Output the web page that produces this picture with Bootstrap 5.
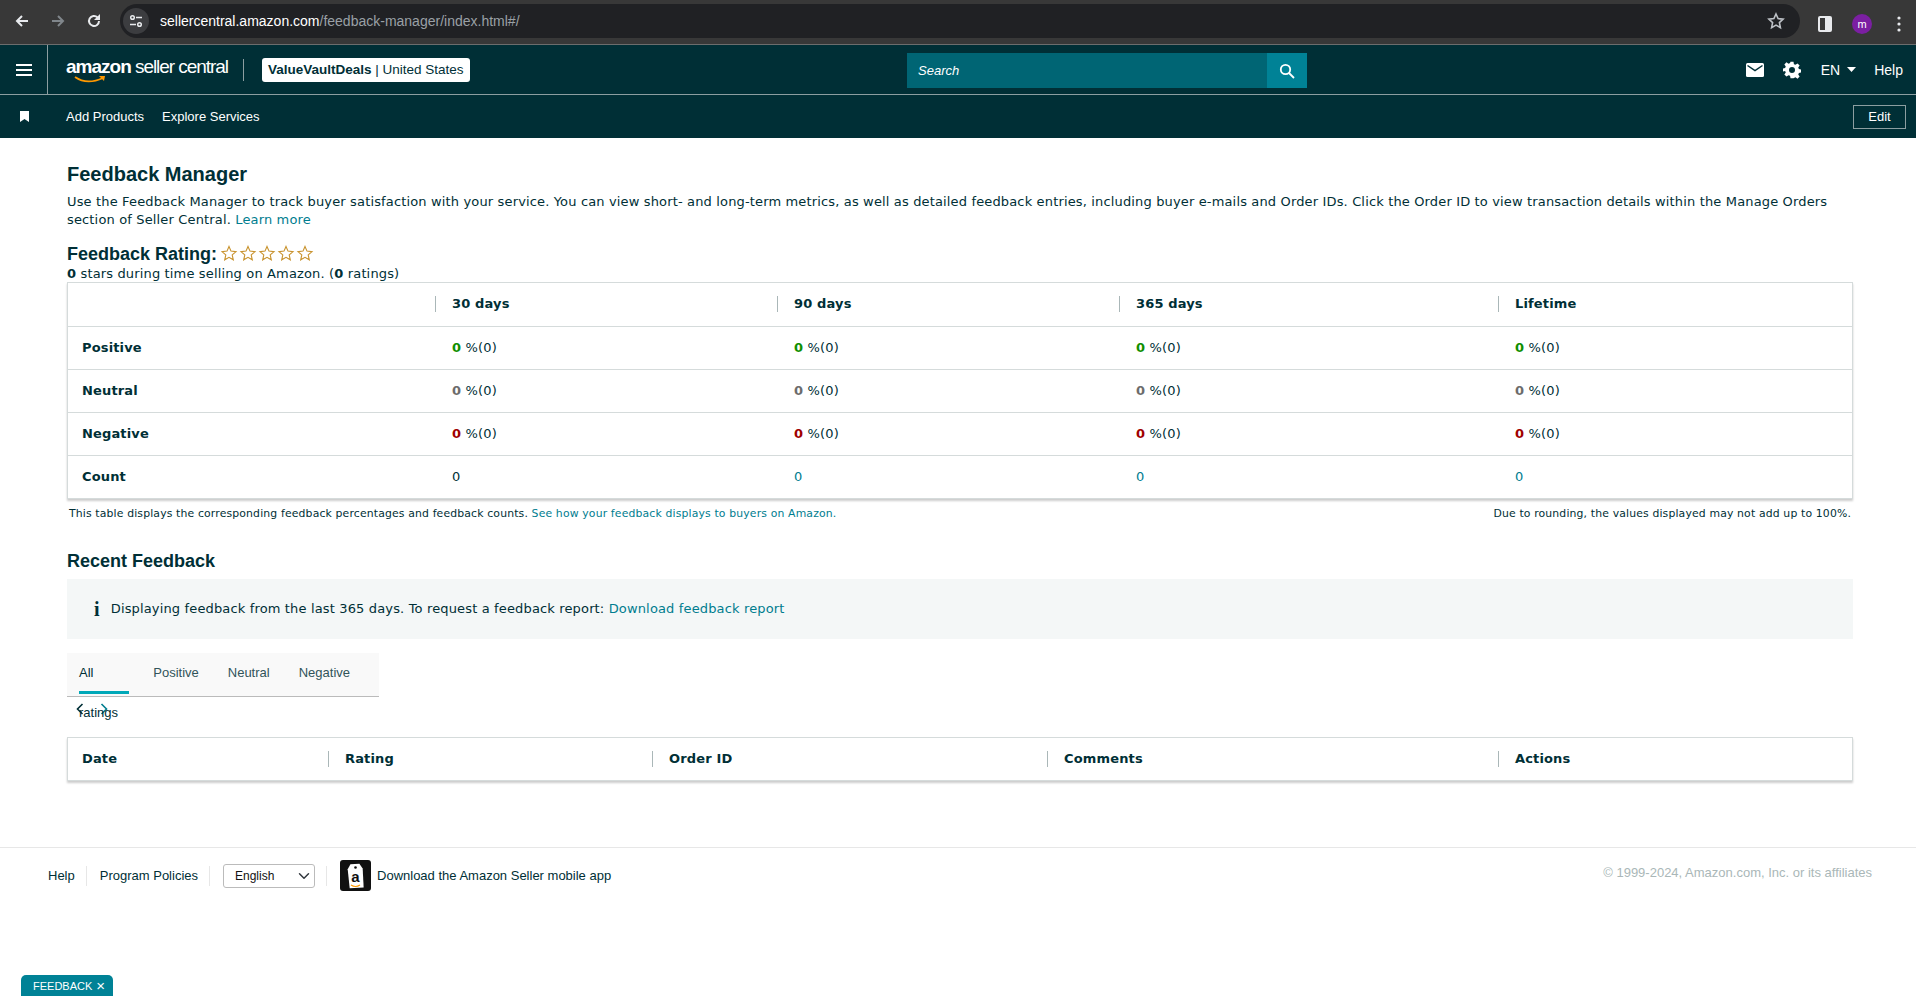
<!DOCTYPE html>
<html lang="en">
<head>
    <meta charset="UTF-8">
    <meta name="viewport" content="width=device-width, initial-scale=1.0">
    <title>Feedback Manager</title>
    <link href="https://cdn.jsdelivr.net/npm/bootstrap@5.3.0/dist/css/bootstrap.min.css" rel="stylesheet">
    <style>
        html, body { height: 100%; }
        body {
            background: #fff;
            color: #002f36;
            font-family: "DejaVu Sans", sans-serif;
            font-size: 13px;
            letter-spacing: .15px;
            line-height: 18px;
            overflow: hidden;
            position: relative;
        }
        a { color: #007d8f; text-decoration: none; }
        .chrome-bar { height: 45px; background: #383838; padding-top: 4px; padding-left: 4px; border-bottom: 1px solid #6d6d6d; letter-spacing: 0; }
        .chrome-btn { width: 36px; height: 34px; }
        .chrome-url {
            width: 1680px; height: 34px; margin-left: 8px; border-radius: 17px;
            background: #202124; color: #fff;
            font-family: "Liberation Sans", sans-serif; font-size: 14px; padding-left: 1px; gap: 11px;
        }
        .chrome-url .url-rest { color: #9aa0a6; }
        .chrome-site { width: 26px; height: 26px; border-radius: 50%; margin-left: 2px; background: #3c3d40; }
        .chrome-star { margin-left: auto; margin-right: 15px; }
        .chrome-tools { padding-left: 18px; }
        .chrome-avatar {
            width: 20px; height: 20px; margin: 0 25px 0 20px; border-radius: 50%; background: #7b1fa2; color: #fff;
            font-family: "Liberation Sans", sans-serif; font-size: 11px; line-height: 20px; text-align: center;
        }
        .sc-top { height: 50px; background: #002f36; border-bottom: 1px solid #8c9ea1; padding: 0; color: #fff; font-family: "Liberation Sans", sans-serif; letter-spacing: 0; }
        .sc-menu { width: 48px; height: 49px; border-right: 1px solid #8c9ea1; }
        .sc-logo { position: relative; margin-left: 18px; width: 159px; height: 30px; color: #fff; font-size: 19px; line-height: 24px; white-space: nowrap; letter-spacing: -1.05px; }
        .sc-logo b { letter-spacing: -1px; }
        .sc-logo svg { position: absolute; left: 0; top: 21px; }
        .sc-divider { width: 1px; height: 22px; background: #8c9ea1; margin: 0 18px; }
        .sc-account { background: #fff; color: #002f36; border-radius: 3px; font-size: 13.5px; height: 24px; line-height: 24px; padding: 0 6px; }
        .sc-search { position: absolute; left: 907px; top: 8px; width: 400px; height: 35px; }
        .sc-search-box { flex: 1; background: #006574; color: #fff; font-style: italic; font-size: 13px; line-height: 35px; padding-left: 11px; }
        .sc-search-btn { width: 40px; background: #008296; }
        .sc-right { margin-left: auto; margin-right: 13px; font-size: 14px; }
        .sc-gear { margin-left: 19px; }
        .sc-lang { margin-left: 20px; }
        .sc-caret { margin-left: 7px; }
        .sc-help { margin-left: 18px; }
        .sc-sub { height: 43px; background: #002f36; color: #fff; font-family: "Liberation Sans", sans-serif; font-size: 13px; padding-left: 20px; letter-spacing: 0; }
        .sc-sub-links { gap: 18px; margin-left: 37px; }
        .sc-edit { margin-left: auto; margin-right: 10px; width: 53px; height: 24px; line-height: 22px; text-align: center; border: 1px solid #8c9ea1; font-size: 13px; }

        .fb-page { padding: 24px 63px 0 67px; }
        .fb-h1 { font: bold 20px/24px "Liberation Sans", sans-serif; letter-spacing: 0; margin: 0 0 7px; }
        .fb-intro { margin: 0 0 13px; }
        .fb-h2 { font: bold 18px/22px "Liberation Sans", sans-serif; letter-spacing: 0; margin: 0; }
        .fb-rating { height: 23px; gap: 4px; }
        .fb-sub { margin: 0; height: 17px; }
        .fb-table-wrap { border: 1px solid #d5dbdb; box-shadow: 0 2px 2px rgba(0,0,0,.2); background: #fff; }
        .fb-table { table-layout: fixed; margin: 0; width: 100%; --bs-table-color: #002f36; font-size: 13px; line-height: 18px; }
        .fb-table th, .fb-table td { padding: 12px 0 12px 17px; border-color: #d5dbdb; height: 43px; vertical-align: middle; font-weight: normal; }
        .fb-table tbody tr:last-child td { border-bottom: 0; height: 42px; }
        .fb-table .fb-label { padding-left: 14px; font-weight: bold; }
        .fb-table thead th { font-weight: bold; position: relative; }
        .fb-table thead th.fb-sep::before { content: ""; position: absolute; left: 0; top: 13px; height: 16px; width: 1px; background: #aab7b8; }
        .fb-table-short thead th { height: 41px; border-bottom: 0; }
        .fb-num { font-weight: bold; }
        .fb-green { color: #0f8f00; }
        .fb-grey { color: #6c6c6c; }
        .fb-red { color: #a00000; }
        .fb-note { font-size: 10.85px; line-height: 14px; margin: 8px 2px 0 2px; letter-spacing: .15px; }
        .fb-recent { margin: 29px 0 7px; }
        .fb-info { background: #f4f7f7; height: 60px; padding-left: 27px; gap: 11px; }
        .fb-info b { font: 900 20px/20px "Liberation Serif", serif; }
        .fb-tabs { width: 312px; height: 44px; margin-top: 14px; background: #f9f9f9; border-bottom: 1px solid #bbb; padding-left: 12px; font: 13px "Liberation Sans", sans-serif; letter-spacing: 0; }
        .fb-tab { height: 41px; line-height: 40px; margin-right: 29px; position: relative; color: #31545a; }
        .fb-tab.on { color: #002f36; }
        .fb-tab.on::after { content: ""; position: absolute; left: 0; right: -5px; bottom: 0; height: 3px; background: #00a8b8; }
        .fb-pager { gap: 16px; height: 24px; padding-left: 9px; }
        .fb-table2-wrap { margin-top: 16px; }
        .sc-foot { position: absolute; left: 0; right: 0; top: 847px; height: 56px; border-top: 1px solid #e7e7e7; padding-left: 48px; font: 13px "Liberation Sans", sans-serif; letter-spacing: 0; }
        .foot-sep { width: 1px; height: 20px; background: #e7e7e7; margin: 0 13px 0 11px; }
        .foot-select { width: 92px; height: 24px; font: 12px "Liberation Sans", sans-serif; padding: 0 0 0 11px; border-color: #bbb; color: #111; background-position: right 4px center; background-size: 12px; border-radius: 3px; }
        .foot-copy { margin-left: auto; margin-right: 44px; margin-top: -6px; color: #aab7b8; font-size: 13px; }
        .foot-app { gap: 6px; }
        .foot-icon { width: 31px; height: 31px; border-radius: 3px; background: #111; display: block; }
        .fb-float { position: absolute; left: 21px; bottom: 0; width: 92px; height: 21px; background: #008296; color: #fff; border-radius: 5px 5px 0 0; font: 11px/22px "Liberation Sans", sans-serif; letter-spacing: 0; padding-left: 12px; white-space: nowrap; }
        .fb-float span { font-size: 15px; margin-left: 1px; vertical-align: -1px; }
    </style>
</head>
<body>
    <div class="chrome-bar d-flex">
        <div class="chrome-btn d-flex align-items-center justify-content-center">
            <svg width="16" height="16" viewBox="0 0 16 16" fill="none" stroke="#e8eaed" stroke-width="2"><path d="M14 8H3M8 3 3 8l5 5"/></svg>
        </div>
        <div class="chrome-btn d-flex align-items-center justify-content-center">
            <svg width="16" height="16" viewBox="0 0 16 16" fill="none" stroke="#80868b" stroke-width="2"><path d="M2 8h11M8 3l5 5-5 5"/></svg>
        </div>
        <div class="chrome-btn d-flex align-items-center justify-content-center">
            <svg width="16" height="16" viewBox="0 0 16 16" fill="none" stroke="#e8eaed" stroke-width="2"><path d="M13 8a5 5 0 1 1-1.5-3.600"/><path fill="#e8eaed" stroke="none" d="M14 1v6H8z"/></svg>
        </div>
        <div class="chrome-url d-flex align-items-center">
            <div class="chrome-site d-flex align-items-center justify-content-center">
                <svg width="14" height="14" viewBox="0 0 14 14" fill="none" stroke="#e8eaed" stroke-width="1.500"><circle cx="3.500" cy="3.500" r="1.800"/><path d="M7 3.500h6M1 10.500h6"/><circle cx="10.500" cy="10.500" r="1.800"/></svg>
            </div>
            <span>sellercentral.amazon.com<span class="url-rest">/feedback-manager/index.html#/</span></span>
            <svg class="chrome-star" width="18" height="18" viewBox="0 0 18 18" fill="none" stroke="#bdc1c6" stroke-width="1.600"><path d="m9 2 2.100 4.600 5 .6-3.700 3.400 1 5L9 13.100l-4.400 2.500 1-5L1.900 7.200l5-.6z"/></svg>
        </div>
        <div class="chrome-tools d-flex align-items-center">
            <svg width="14" height="16" viewBox="0 0 14 16"><rect x="1" y="1" width="12" height="14" rx="1" fill="none" stroke="#e8eaed" stroke-width="2"/><rect x="7" y="1" width="6" height="14" fill="#e8eaed"/></svg>
            <div class="chrome-avatar">m</div>
            <svg width="4" height="16" viewBox="0 0 4 16" fill="#e8eaed"><circle cx="2" cy="2" r="1.600"/><circle cx="2" cy="8" r="1.600"/><circle cx="2" cy="14" r="1.600"/></svg>
        </div>
    </div>

    <nav class="sc-top d-flex align-items-center position-relative">
        <div class="sc-menu d-flex align-items-center justify-content-center">
            <svg width="16" height="12" viewBox="0 0 16 12" fill="#fff"><rect width="16" height="2"/><rect y="5" width="16" height="2"/><rect y="10" width="16" height="2"/></svg>
        </div>
        <div class="sc-logo">
            <b>amazon</b> seller central
            <svg width="46" height="9" viewBox="0 0 46 9" fill="none"><path d="M9 1c7 5 17 6 28 1" stroke="#ff9900" stroke-width="1.800"/><path d="m33 0 6 0-1 5z" fill="#ff9900"/></svg>
        </div>
        <div class="sc-divider"></div>
        <div class="sc-account"><b>ValueVaultDeals</b> | United States</div>
        <div class="sc-search d-flex">
            <div class="sc-search-box">Search</div>
            <div class="sc-search-btn d-flex align-items-center justify-content-center">
                <svg width="16" height="16" viewBox="0 0 16 16" fill="none" stroke="#fff" stroke-width="1.800"><circle cx="6.500" cy="6.500" r="4.700"/><path d="m10 10 5 5"/></svg>
            </div>
        </div>
        <div class="sc-right d-flex align-items-center">
            <svg width="18" height="14" viewBox="0 0 18 14"><rect width="18" height="14" rx="1.500" fill="#fff"/><path d="m1.500 2.500 7.500 5 7.500-5" fill="none" stroke="#002f36" stroke-width="1.500"/></svg>
            <svg class="sc-gear" width="18" height="18" viewBox="0 0 24 24" fill="#fff"><path fill-rule="evenodd" d="M10 1h4l.6 3.200 2 .9 2.800-1.900 2.800 2.800-1.900 2.800.9 2 3.200.6v4l-3.200.6-.9 2 1.900 2.800-2.800 2.800-2.800-1.900-2 .9L14 23h-4l-.6-3.200-2-.9-2.800 1.900-2.800-2.800 1.900-2.800-.9-2L-.4 14v-4l3.200-.6.900-2L1.800 4.600 4.600 1.800l2.800 1.900 2-.9zM12 8a4 4 0 1 0 0 8 4 4 0 0 0 0-8"/></svg>
            <span class="sc-lang">EN</span>
            <svg class="sc-caret" width="9" height="5" viewBox="0 0 9 5" fill="#fff"><path d="M0 0h9L4.500 5z"/></svg>
            <span class="sc-help">Help</span>
        </div>
    </nav>
    <div class="sc-sub d-flex align-items-center">
        <svg width="9" height="11" viewBox="0 0 9 11" fill="#fff"><path d="M0 0h9v11L4.500 8 0 11z"/></svg>
        <div class="sc-sub-links d-flex"><span>Add Products</span><span>Explore Services</span></div>
        <div class="sc-edit">Edit</div>
    </div>

    <main class="fb-page">
        <h1 class="fb-h1">Feedback Manager</h1>
        <p class="fb-intro">Use the Feedback Manager to track buyer satisfaction with your service. You can view short- and long-term metrics, as well as detailed feedback entries, including buyer e-mails and Order IDs. Click the Order ID to view transaction details within the Manage Orders section of Seller Central. <a href="#">Learn more</a></p>
        <div class="fb-rating d-flex align-items-center">
            <h2 class="fb-h2">Feedback Rating:</h2>
            <svg width="96" height="18" viewBox="0 0 96 18" fill="none" stroke="#c8922d" stroke-width="1.100">
                <path id="st" d="m8 1.500 2 4.600 5 .5-3.800 3.300 1.100 4.900L8 12.300l-4.300 2.500 1.100-4.900L1 6.600l5-.5z"/>
                <use href="#st" x="19"/><use href="#st" x="38"/><use href="#st" x="57"/><use href="#st" x="76"/>
            </svg>
        </div>
        <p class="fb-sub"><b>0</b> stars during time selling on Amazon. (<b>0</b> ratings)</p>

        <div class="fb-table-wrap">
            <table class="table fb-table">
                <colgroup><col style="width:367px"><col style="width:342px"><col style="width:342px"><col style="width:379px"><col></colgroup>
                <thead>
                    <tr><th></th><th class="fb-sep">30 days</th><th class="fb-sep">90 days</th><th class="fb-sep">365 days</th><th class="fb-sep">Lifetime</th></tr>
                </thead>
                <tbody>
                    <tr><td class="fb-label">Positive</td><td><span class="fb-num fb-green">0</span> %(0)</td><td><span class="fb-num fb-green">0</span> %(0)</td><td><span class="fb-num fb-green">0</span> %(0)</td><td><span class="fb-num fb-green">0</span> %(0)</td></tr>
                    <tr><td class="fb-label">Neutral</td><td><span class="fb-num fb-grey">0</span> %(0)</td><td><span class="fb-num fb-grey">0</span> %(0)</td><td><span class="fb-num fb-grey">0</span> %(0)</td><td><span class="fb-num fb-grey">0</span> %(0)</td></tr>
                    <tr><td class="fb-label">Negative</td><td><span class="fb-num fb-red">0</span> %(0)</td><td><span class="fb-num fb-red">0</span> %(0)</td><td><span class="fb-num fb-red">0</span> %(0)</td><td><span class="fb-num fb-red">0</span> %(0)</td></tr>
                    <tr><td class="fb-label">Count</td><td>0</td><td><a href="#">0</a></td><td><a href="#">0</a></td><td><a href="#">0</a></td></tr>
                </tbody>
            </table>
        </div>
        <div class="fb-note d-flex justify-content-between">
            <span>This table displays the corresponding feedback percentages and feedback counts. <a href="#">See how your feedback displays to buyers on Amazon.</a></span>
            <span>Due to rounding, the values displayed may not add up to 100%.</span>
        </div>

        <h2 class="fb-h2 fb-recent">Recent Feedback</h2>
        <div class="fb-info d-flex align-items-center">
            <b>i</b>
            <span>Displaying feedback from the last 365 days. To request a feedback report: <a href="#">Download feedback report</a></span>
        </div>
        <div class="fb-tabs d-flex">
            <div class="fb-tab on">All ratings</div>
            <div class="fb-tab">Positive</div>
            <div class="fb-tab">Neutral</div>
            <div class="fb-tab">Negative</div>
        </div>
        <div class="fb-pager d-flex align-items-center">
            <svg width="8" height="12" viewBox="0 0 8 12" fill="none" stroke="#002f36" stroke-width="1.600"><path d="M6.500 1 1.500 6l5 5"/></svg>
            <svg width="8" height="12" viewBox="0 0 8 12" fill="none" stroke="#007d8f" stroke-width="1.600"><path d="m1.500 1 5 5-5 5"/></svg>
        </div>
        <div class="fb-table-wrap fb-table2-wrap">
            <table class="table fb-table fb-table-short">
                <colgroup><col style="width:260px"><col style="width:324px"><col style="width:395px"><col style="width:451px"><col></colgroup>
                <thead>
                    <tr><th class="fb-label">Date</th><th class="fb-sep">Rating</th><th class="fb-sep">Order ID</th><th class="fb-sep">Comments</th><th class="fb-sep">Actions</th></tr>
                </thead>
            </table>
        </div>
    </main>

    <footer class="sc-foot d-flex align-items-center">
        <span>Help</span>
        <div class="foot-sep"></div>
        <span>Program Policies</span>
        <div class="foot-sep"></div>
        <select class="form-select foot-select" aria-label="Language"><option>English</option></select>
        <div class="foot-sep"></div>
        <div class="foot-app d-flex align-items-center">
            <svg class="foot-icon" viewBox="0 0 31 31"><path d="m11 4 9 0 3 5 0 19-14 0-1-19z" fill="#fff" transform="rotate(-3 15 15)"/><circle cx="15.500" cy="7.500" r="1.300" fill="#111"/><text x="15.500" y="22" text-anchor="middle" font-family="Liberation Sans, sans-serif" font-size="15" font-weight="bold" fill="#111">a</text><path d="M11 25c3 2 6 2 9 0" stroke="#f90" stroke-width="1.200" fill="none"/></svg>
            <span>Download the Amazon Seller mobile app</span>
        </div>
        <div class="foot-copy">© 1999-2024, Amazon.com, Inc. or its affiliates</div>
    </footer>
    <div class="fb-float">FEEDBACK <span>×</span></div>

    <script src="https://cdn.jsdelivr.net/npm/bootstrap@5.3.0/dist/js/bootstrap.bundle.min.js"></script>
</body>
</html>
